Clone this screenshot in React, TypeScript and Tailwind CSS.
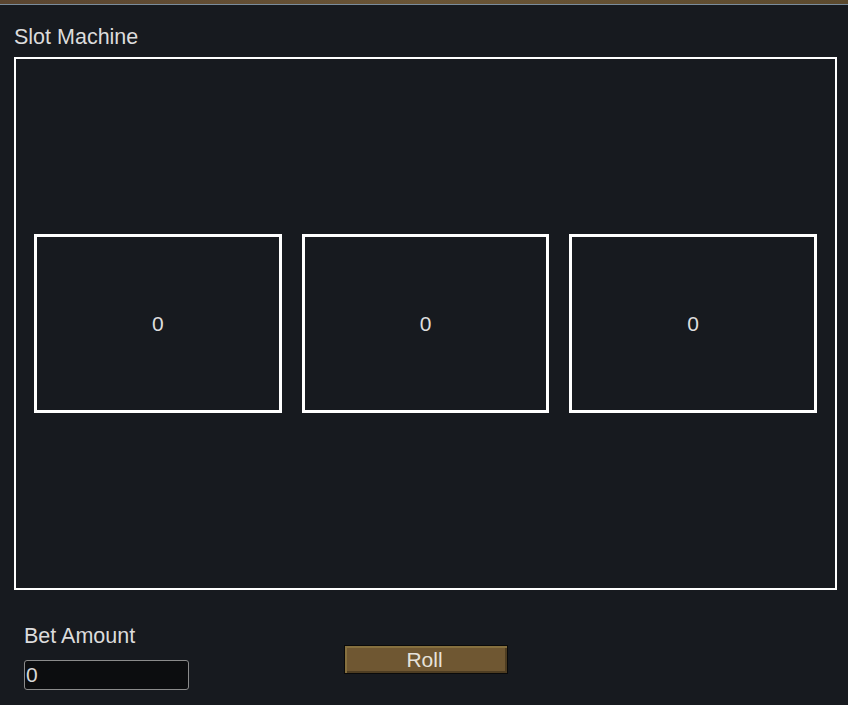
import { useState } from "react";

const REELS = [0, 1, 2];

function Reel({ value }: { value: number }) {
  return (
    <div className="flex h-[179px] flex-1 items-center justify-center border-[3px] border-white pt-px text-[21px] text-[#dedede]">
      {value}
    </div>
  );
}

export default function App() {
  const [values] = useState<number[]>([0, 0, 0]);
  const [bet, setBet] = useState("0");

  return (
    <div
      className="min-h-screen bg-[#171a1f] text-[#dcdcdc]"
      style={{ fontFamily: '"Liberation Sans", Arial, sans-serif' }}
    >
      {/* bit of the page banner peeking above the panel */}
      <div className="h-[4px] bg-gradient-to-r from-[#5a4530] via-[#6a5536] to-[#5c4a2e]" />
      <div className="h-px bg-[#7a8c9c]" />

      <div className="pl-[14px] pt-[20px]">
        <h2 className="text-[21.5px] leading-[24px] text-[#dcdcdc]">Slot Machine</h2>

        <div className="mt-[8px] flex h-[533px] w-[823px] items-center gap-5 border-2 border-white px-[18px]">
          {REELS.map((i) => (
            <Reel key={i} value={values[i]} />
          ))}
        </div>

        <div className="mt-[34px] flex items-end pl-[10px]">
          <div className="flex flex-col">
            <label className="text-[21.5px] leading-[24px] text-[#dcdcdc]">Bet Amount</label>
            <input
              value={bet}
              onChange={(e) => setBet(e.target.value)}
              className="mt-[12px] h-[30px] w-[165px] rounded-[3px] border border-[#8b8b8b] bg-[#0c0d0f] pl-[1px] text-[21px] text-[#d8d8d8] outline-none"
            />
          </div>
          <button className="mb-[16px] ml-[155px] h-[29px] w-[164px] border border-[#0a0a0a] bg-[#6f5732] pr-[3px] text-[21px] leading-none text-[#e6e2da] shadow-[inset_2px_2px_0_#86703f,inset_-2px_-2px_0_#4e3d22]">
            Roll
          </button>
        </div>
      </div>
    </div>
  );
}
